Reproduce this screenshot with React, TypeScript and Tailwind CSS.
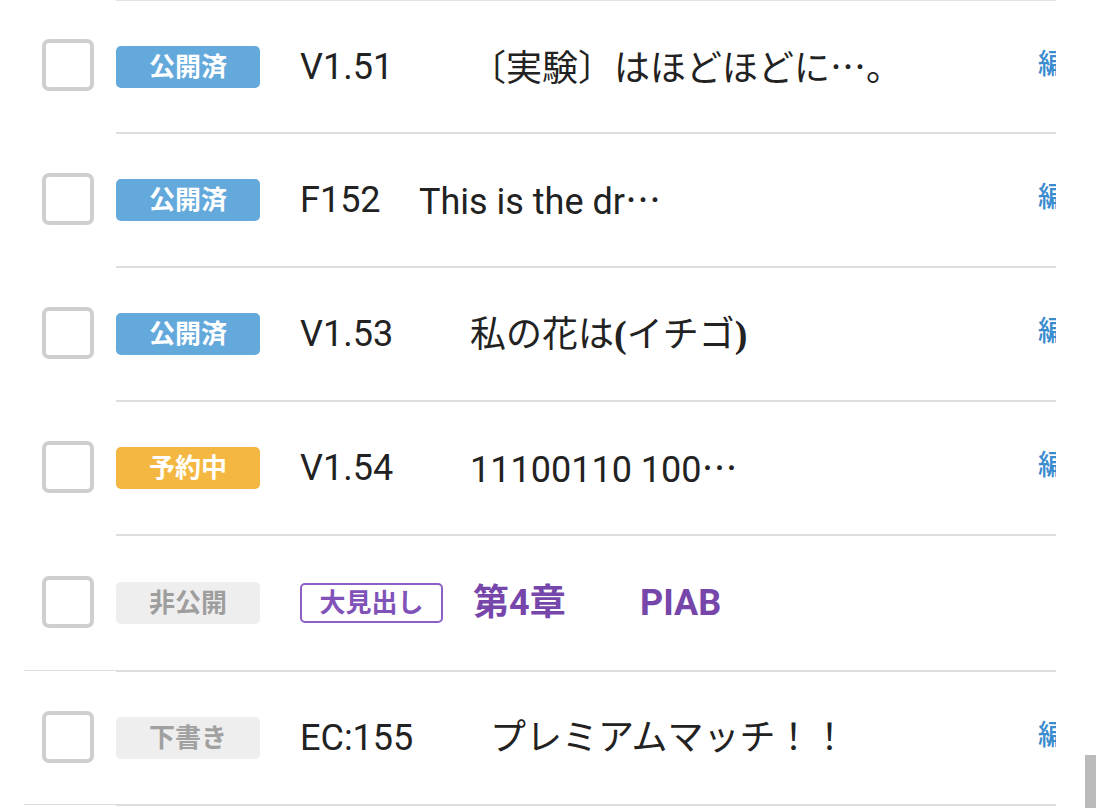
import React from "react";

const cjk = "font-['Roboto','Noto_Sans_CJK_JP',sans-serif]";
const cjkOnly = "font-['Noto_Sans_CJK_JP',sans-serif]";

type Row = {
  status: string;
  statusCls: string;
  kind: "normal" | "heading";
  ver?: string;
  verW?: string;
  title?: React.ReactNode;
  edit: boolean;
  tall?: boolean;
  leftLine?: boolean;
};

const Ell = () => <span className={cjkOnly}>…</span>;

const rows: Row[] = [
  {
    status: "公開済",
    statusCls: "bg-[#64a9dc] text-white",
    kind: "normal",
    ver: "V1.51",
    verW: "w-[170px]",
    title: (
      <>
        〔実験〕はほどほどに<Ell />。
      </>
    ),
    edit: true,
  },
  {
    status: "公開済",
    statusCls: "bg-[#64a9dc] text-white",
    kind: "normal",
    ver: "F152",
    verW: "w-[119px]",
    title: (
      <>
        This is the dr<Ell />
      </>
    ),
    edit: true,
  },
  {
    status: "公開済",
    statusCls: "bg-[#64a9dc] text-white",
    kind: "normal",
    ver: "V1.53",
    verW: "w-[170px]",
    title: (
      <>
        私の花は<span className="font-['Liberation_Serif',serif] font-bold text-[38px]">(</span>イチゴ
        <span className="font-['Liberation_Serif',serif] font-bold text-[38px]">)</span>
      </>
    ),
    edit: true,
  },
  {
    status: "予約中",
    statusCls: "bg-[#f4b842] text-white",
    kind: "normal",
    ver: "V1.54",
    verW: "w-[170px]",
    title: (
      <>
        11100110 100<Ell />
      </>
    ),
    edit: true,
  },
  {
    status: "非公開",
    statusCls: "bg-[#eeeeee] text-[#9e9e9e]",
    kind: "heading",
    edit: false,
    tall: true,
    leftLine: true,
  },
  {
    status: "下書き",
    statusCls: "bg-[#eeeeee] text-[#a0a0a0]",
    kind: "normal",
    ver: "EC:155",
    verW: "w-[190px]",
    title: <>プレミアムマッチ！！</>,
    edit: true,
    leftLine: true,
  },
];

function Checkbox() {
  return (
    <div className="w-[52px] h-[52px] rounded-[7px] border-[4px] border-[#cfcfcf] bg-white mb-[3px] shrink-0" />
  );
}

export default function App() {
  return (
    <div className={`relative w-[1096px] h-[808px] bg-white overflow-hidden ${cjk}`} lang="ja">
      <div className="w-[1056px] overflow-hidden">
        {rows.map((r, i) => (
          <div key={i} className={`flex ${r.tall ? "h-[136px]" : "h-[134px]"}`}>
            <div className="w-[116px] shrink-0 flex flex-col">
              <div className="flex-1 flex items-center pl-[42px]">
                <Checkbox />
              </div>
              {r.leftLine ? (
                <div className="ml-[24px] h-[1px] bg-[#dedede] mb-[1px]" />
              ) : (
                <div className="h-[2px]" />
              )}
            </div>
            <div
              className={`flex-1 min-w-0 flex items-center border-b-2 border-[#dddddd] ${
                i === 0 ? "border-t border-t-[#e2e2e2]" : ""
              }`}
            >
              <div
                className={`w-[144px] h-[42px] rounded-[5px] flex items-center justify-center text-[26px] font-bold leading-none shrink-0 ${r.statusCls}`}
              >
                {r.status}
              </div>
              {r.kind === "normal" ? (
                <>
                  <div className={`ml-[40px] shrink-0 text-[36px] leading-none text-[#222222] ${r.verW}`}>
                    {r.ver}
                  </div>
                  <div className="text-[36px] leading-none text-[#222222] whitespace-nowrap">{r.title}</div>
                </>
              ) : (
                <>
                  <div className="ml-[40px] w-[143px] h-[40px] shrink-0 rounded-[5px] border-2 border-[#8c5fc4] flex items-center justify-center text-[26px] font-bold leading-none text-[#8152b8]">
                    大見出し
                  </div>
                  <div className="ml-[30px] w-[167px] shrink-0 text-[36px] font-bold leading-none text-[#7646ab]">
                    第4章
                  </div>
                  <div className="text-[36px] font-bold leading-none text-[#7646ab]">PIAB</div>
                </>
              )}
              <div className="flex-1" />
              {r.edit && (
                <div className="shrink-0 w-[58px] mr-[-40px] mb-[4px] text-[28px] font-medium leading-none text-[#3a8ccf] whitespace-nowrap">
                  編集
                </div>
              )}
            </div>
          </div>
        ))}
      </div>
      <div className="absolute right-0 top-[755px] w-[11px] h-[53px] bg-[#bbbbbb]" />
    </div>
  );
}
